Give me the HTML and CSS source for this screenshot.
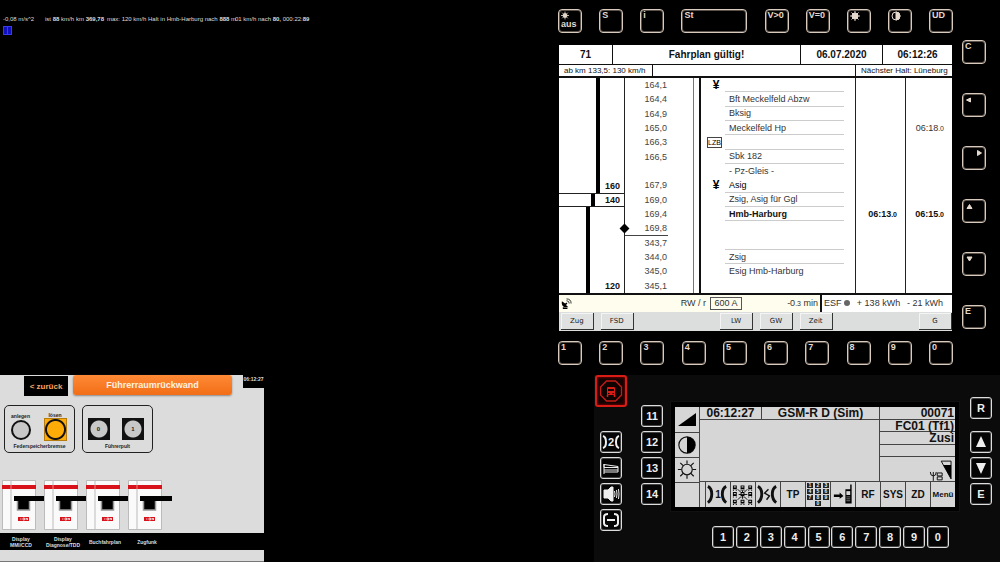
FILE: index.html
```html
<!DOCTYPE html>
<html lang="de">
<head>
<meta charset="utf-8">
<title>Führerstand</title>
<link rel="stylesheet" href="styles.css">
</head>
<body>
<main class="desk">
  <section class="console" aria-label="Fahrdaten">
    <p class="readout"><span>-0,08 m/s^2</span><span>ist <b>88</b> km/h</span><span>km <b>369,78</b></span><span>max: 120 km/h</span><span>Halt in Hmb-Harburg nach <b>888</b> m</span><span>01 km/h nach <b>80,</b> 000:22:<b>89</b></span></p>
    <svg class="signal" viewBox="0 0 9 9"><path d="M0 0h9v9H0z" fill="#3a3af0"/><path d="M1 1h3v7h-3zM5 1h3v7h-3z" fill="#1010c0"/></svg>
  </section>

  <section class="ebula" aria-label="EBuLa">
    <div class="unit">
      <div class="keys">
        <button class="key"><svg class="glyph small" viewBox="0 0 10 10"><circle cx="5" cy="5" r="2.500"/><path d="M5 0v10M0 5h10M1.500 1.500l7 7M8.500 1.500l-7 7"/></svg>aus</button>
        <button class="key">S</button>
        <button class="key">i</button>
        <button class="key wide">St</button>
        <button class="key">V&gt;0</button>
        <button class="key">V=0</button>
        <button class="key" aria-label="Hell"><svg class="glyph" viewBox="0 0 10 10"><circle cx="5" cy="5" r="3"/><path d="M5 0v10M0 5h10M1.500 1.500l7 7M8.500 1.500l-7 7"/></svg></button>
        <button class="key" aria-label="Kontrast"><svg class="glyph" viewBox="0 0 10 10"><circle cx="5" cy="5" r="4" fill="none"/><path d="M5 1a4 4 0 0 1 0 8z"/></svg></button>
        <button class="key">UD</button>
      </div>
      <div class="display">
        <header class="head"><span>71</span><span>Fahrplan gültig!</span><span>06.07.2020</span><span>06:12:26</span></header>
        <div class="sub"><span>ab km 133,5: 130 km/h</span><span></span><span>Nächster Halt: Lüneburg</span></div>
        <table class="plan">
          <colgroup><col class="c-speed"><col class="c-km"><col class="c-rule"><col class="c-sym"><col class="c-name"><col class="c-pad"><col class="c-arr"><col class="c-dep"></colgroup>
          <tbody>
          <tr><td class="speed v160" rowspan="8">160</td><td class="km">164,1</td><td class="rule" rowspan="15"></td><td class="sym">¥</td><td class="name line"></td><td rowspan="15"></td><td class="time"></td><td class="time"></td></tr>
          <tr><td class="km">164,4</td><td></td><td class="name line">Bft Meckelfeld Abzw</td><td class="time"></td><td class="time"></td></tr>
          <tr><td class="km">164,9</td><td></td><td class="name line">Bksig</td><td class="time"></td><td class="time"></td></tr>
          <tr><td class="km">165,0</td><td></td><td class="name line">Meckelfeld Hp</td><td class="time"></td><td class="time">06:18<small>.0</small></td></tr>
          <tr><td class="km">166,3</td><td class="sym"><span class="lzb">LZB</span></td><td class="name line"></td><td class="time"></td><td class="time"></td></tr>
          <tr><td class="km">166,5</td><td></td><td class="name line">Sbk 182</td><td class="time"></td><td class="time"></td></tr>
          <tr><td class="km"></td><td></td><td class="name">- Pz-Gleis -</td><td class="time"></td><td class="time"></td></tr>
          <tr><td class="km">167,9</td><td class="sym">¥</td><td class="name line dark">Asig</td><td class="time"></td><td class="time"></td></tr>
          <tr><td class="speed v140">140</td><td class="km">169,0</td><td></td><td class="name line">Zsig, Asig für Ggl</td><td class="time"></td><td class="time"></td></tr>
          <tr class="stop"><td class="speed v120" rowspan="6">120</td><td class="km">169,4</td><td></td><td class="name line">Hmb-Harburg</td><td class="time">06:13<small>.0</small></td><td class="time">06:15<small>.0</small></td></tr>
          <tr><td class="km here">169,8</td><td></td><td class="name"></td><td class="time"></td><td class="time"></td></tr>
          <tr><td class="km">343,7</td><td></td><td class="name line"></td><td class="time"></td><td class="time"></td></tr>
          <tr><td class="km">344,0</td><td></td><td class="name line">Zsig</td><td class="time"></td><td class="time"></td></tr>
          <tr><td class="km">345,0</td><td></td><td class="name">Esig Hmb-Harburg</td><td class="time"></td><td class="time"></td></tr>
          <tr><td class="km">345,1</td><td></td><td class="name"></td><td class="time"></td><td class="time"></td></tr>
          </tbody>
        </table>
        <div class="status">
          <div class="pale">
            <svg class="dish" viewBox="0 0 12 12"><path d="M1 3.500C0 8 3 11 8 10L5.500 7.500 7 6 6 5 4.500 6z"/><path d="M2 10v2h5v-1.500z"/><path d="M6 3q3 0 3 3M6 1q5 0 5 5" fill="none" stroke="#222"/></svg>
            <span class="mode">RW / r</span><span class="amp">600 A</span><span class="delay">-0<small>.3</small> min</span>
          </div>
          <div class="energy"><span>ESF <i class="dot"></i></span><span>+ 138 kWh</span><span>- 21 kWh</span></div>
        </div>
        <div class="soft"><button>Zug</button><button>FSD</button><i></i><i></i><button>LW</button><button>GW</button><button>Zeit</button><i></i><i></i><button>G</button></div>
      </div>
      <div class="keys"><button class="key">1</button><button class="key">2</button><button class="key">3</button><button class="key">4</button><button class="key">5</button><button class="key">6</button><button class="key">7</button><button class="key">8</button><button class="key">9</button><button class="key">0</button></div>
    </div>
    <div class="side">
      <button class="key">C</button>
      <button class="key" aria-label="Links"><svg class="glyph" viewBox="0 0 10 10"><path d="M1.500 5l4-2v4z"/></svg></button>
      <button class="key right" aria-label="Rechts"><svg class="glyph" viewBox="0 0 10 10"><path d="M8.500 5l-4-2.500v5z"/></svg></button>
      <button class="key" aria-label="Auf"><svg class="glyph" viewBox="0 0 10 10"><path d="M4.500 3.500l2.500 4h-5z"/></svg></button>
      <button class="key" aria-label="Ab"><svg class="glyph" viewBox="0 0 10 10"><path d="M4.500 7l2.500-4h-5z"/></svg></button>
      <button class="key">E</button>
    </div>
  </section>

  <section class="cab" aria-label="Führerraumrückwand">
    <header class="cab-head"><button class="back">&lt; zurück</button><h1>Führerraumrückwand</h1><time>06:12:27</time></header>
    <div class="groups">
      <fieldset class="group">
        <label class="sw" for="anl">anlegen<button id="anl" class="lamp" aria-label="anlegen"></button></label>
        <label class="sw" for="loe">lösen<button id="loe" class="lamp amber" aria-label="lösen"></button></label>
        <p>Federspeicherbremse</p>
      </fieldset>
      <fieldset class="group">
        <button class="lamp boxed">0</button><button class="lamp boxed">1</button>
        <p>Führerpult</p>
      </fieldset>
    </div>
    <div class="breakers">
      <button class="breaker" aria-label="Display MMI/CCD"><svg viewBox="0 0 45 50"><use href="#brk"/></svg></button>
      <button class="breaker" aria-label="Display Diagnose/TDD"><svg viewBox="0 0 45 50"><use href="#brk"/></svg></button>
      <button class="breaker" aria-label="Buchfahrplan"><svg viewBox="0 0 45 50"><use href="#brk"/></svg></button>
      <button class="breaker" aria-label="Zugfunk"><svg viewBox="0 0 45 50"><use href="#brk"/></svg></button>
    </div>
    <div class="labels"><span>Display<br>MMI/CCD</span><span>Display<br>Diagnose/TDD</span><span>Buchfahrplan</span><span>Zugfunk</span></div>
  </section>

  <section class="radio" aria-label="GSM-R">
    <div class="col icons">
      <button class="emergency" aria-label="Notruf"><svg viewBox="0 0 32 32"><path d="M11.500 6h9l6 6v8l-6 6h-9l-6-6v-8z" fill="none" stroke="#c51c16" stroke-width="1.300"/><path d="M12 13q0-1 1-1h6q1 0 1 1v7h-8z" fill="#d91c16"/><path d="M13 14h6v2h-6zM13 18h1.500v1H13zM17.500 18H19v1h-1.500z" fill="#160303"/><path d="M12.500 20v2M19.500 20v2" stroke="#d91c16" stroke-width="1.500"/></svg></button>
      <div class="stack">
        <button class="rk" aria-label="Kanal 2"><svg viewBox="0 0 22 22"><path d="M3 5q3 1 3 6t-3 6M19 5q-3 1-3 6t3 6" class="thick"/></svg><span>2</span></button>
        <button class="rk" aria-label="Hörer"><svg viewBox="0 0 22 22"><path d="M4 7.500l14 2v5.500H4M4 7v3.500h14M4 13h14M4 7v10" fill="none"/></svg></button>
        <button class="rk" aria-label="Lautsprecher"><svg viewBox="0 0 22 22"><path d="M4 7h4l3-3h2v14h-2l-3-3H4z" fill="#eee"/><path d="M14.500 8q1 3 0 6M16.500 7q1 4 0 8M18.500 6q1 5 0 10" fill="none"/></svg></button>
        <button class="rk" aria-label="Trennen"><svg viewBox="0 0 22 22"><path d="M8 5q-4 0-4 3v6q0 3 4 3M14 5q4 0 4 3v6q0 3-4 3M7 11h8" class="thick"/></svg></button>
      </div>
    </div>
    <div class="col numbers"><button class="rk">11</button><button class="rk">12</button><button class="rk">13</button><button class="rk">14</button></div>
    <div class="centre">
      <div class="frame">
        <div class="lcd">
          <div class="lcd-icons">
            <svg viewBox="0 0 24 25"><path d="M3 19L21 6v13z"/></svg>
            <svg viewBox="0 0 24 25"><circle cx="12" cy="12.500" r="8.500" fill="none" stroke="#111" stroke-width="1.200"/><path d="M12 4a8.500 8.500 0 0 1 0 17z"/></svg>
            <svg viewBox="0 0 24 25" fill="none" stroke="#111" stroke-width="1.200"><circle cx="12" cy="12" r="5.500"/><path d="M12 6V2.500M12 18v3.500M6 12H2.500M18 12h3.500M8 8L5 5M16 8l3-3M8 16l-3 3M16 16l3 3"/></svg>
            <i></i>
          </div>
          <div class="lcd-main">
            <div class="clock">06:12:27</div><div class="net">GSM-R D (Sim)</div>
            <div class="info"><span>00071</span><span>FC01 (Tf1)</span><span>Zusi</span><span></span>
              <svg viewBox="0 0 76 25"><path d="M62 4h10v18z" fill="none" stroke="#111"/><path d="M64 8h8v14z"/><path d="M54 15v9M51 15q0 4 3 4t3-4M58 16h5v3h-5zM58 20h5v3h-5z" fill="none" stroke="#111"/></svg>
            </div>
          </div>
          <div class="lcd-soft">
            <button aria-label="Kanal 1"><svg viewBox="0 0 25 25"><path d="M2 4q4 2 4 8t-4 9M21 4q-4 2-4 8t4 9" fill="none" stroke="#111" stroke-width="3"/></svg><span>1</span></button>
            <button aria-label="Alle Züge"><svg viewBox="0 0 25 25"><path d="M7 7l3 3M17 7l-3 3M7 18l3-3M17 18l-3-3M12 8v9M8 12.500h9" stroke="#111"/><use href="#tr" x="2" y="3"/><use href="#tr" x="10" y="3"/><use href="#tr" x="18" y="3"/><use href="#tr" x="2" y="10"/><use href="#tr" x="10" y="10"/><use href="#tr" x="18" y="10"/><use href="#tr" x="2" y="18"/><use href="#tr" x="10" y="18"/><use href="#tr" x="18" y="18"/></svg></button>
            <button aria-label="Rangieren"><svg viewBox="0 0 25 25"><path d="M2 4q4 2 4 8t-4 9M21 4q-4 2-4 8t4 9" fill="none" stroke="#111" stroke-width="3"/><path d="M13 7l-4 4 5 3-3 4" fill="none" stroke="#111" stroke-width="1.500"/></svg></button>
            <button>TP</button>
            <button aria-label="Ziffern"><span class="pad"><b>1</b><b>2</b><b>3</b><b>4</b><b>5</b><b>6</b><b>7</b><b>8</b><b>9</b><b class="zero">0</b></span></button>
            <button aria-label="Anrufen"><svg viewBox="0 0 25 25"><path d="M3 12.500h6v-2l4 3.500-4 3v-2H3zM15 7h5V2h1.500v20H15z"/><path d="M16 9h4v4h-4z" fill="#d6d6d6"/><path d="M16 15h4M16 17h4M16 19h4" stroke="#aaa" stroke-width=".7"/></svg></button>
            <button>RF</button><button>SYS</button><button>ZD</button><button class="menu">Menü</button>
          </div>
        </div>
      </div>
      <div class="digits"><button class="rk">1</button><button class="rk">2</button><button class="rk">3</button><button class="rk">4</button><button class="rk">5</button><button class="rk">6</button><button class="rk">7</button><button class="rk">8</button><button class="rk">9</button><button class="rk">0</button></div>
    </div>
    <div class="col nav">
      <button class="rk">R</button>
      <div class="stack">
        <button class="rk" aria-label="Auf"><svg viewBox="0 0 22 22"><path d="M11 5l5 11H6z" fill="#eee" stroke="none"/></svg></button>
        <button class="rk" aria-label="Ab"><svg viewBox="0 0 22 22"><path d="M11 17l5-11H6z" fill="#eee" stroke="none"/></svg></button>
        <button class="rk">E</button>
      </div>
    </div>
  </section>
</main>
<svg class="defs" aria-hidden="true">
  <defs>
    <g id="brk"><path d="M.5.5h33v49H.5z" fill="#fafafa" stroke="#bbb"/><path d="M9 1v48" stroke="#bbb"/><path d="M0 5h34v4H0z" fill="#d8121a"/><path d="M9 5v4" stroke="#e88"/><path d="M15.500 20h12v10h-12z" stroke="#999" stroke-width="1.500"/><path d="M12 16h32v5H12z"/><path d="M16 37h11v4H16z" fill="#d8121a"/><path d="M18 39h1.500M21 38h1.500v2H21zM24 40v-2l1.500 2v-2" fill="none" stroke="#fff" stroke-width=".7"/></g>
    <g id="tr"><path d="M0 0h4v4H0zM0 4.500h1v1H0zM3 4.500h1v1H3z"/><path d="M1 1h2v1.200H1z" fill="#d6d6d6"/></g>
  </defs>
</svg>
</body>
</html>
```
FILE: styles.css
```css
* { box-sizing: border-box; }
body { margin: 0; background: #000; font-family: "Liberation Sans", Arial, sans-serif; }
button { margin: 0; padding: 0; font: inherit; color: inherit; background: none; border: 0; }
p, h1 { margin: 0; }
small { font-size: 7px; }
.defs { display: block; width: 0; height: 0; position: absolute; }
.desk {
  display: grid;
  grid-template-columns: minmax(0, 264fr) minmax(0, 286fr) minmax(0, 44fr) minmax(0, 406fr);
  grid-template-rows: 375px 187px;
}

.console { grid-column: 1 / 3; padding: 16px 3px; color: #ddd; }
.readout { display: grid; grid-template-columns: 42px 31px 31px 41px 87px auto; font-size: 6px; line-height: 7px; white-space: nowrap; }
.signal { display: block; width: 9px; height: 9px; margin-top: 3px; }

/* Timetable display */
.ebula { grid-column: 3 / 5; display: flex; padding: 9px 14px 0 8px; }
.unit { flex: 1; min-width: 0; display: flex; flex-direction: column; }
.keys { display: flex; justify-content: space-between; }
.key {
  width: 24px; height: 24px; padding: 1px 2px;
  display: flex; flex-direction: column; align-items: flex-start;
  border: 1px solid #d8cbbd; border-radius: 4px; box-shadow: inset 0 0 0 1px #5a524a;
  background: #000; color: #e4d9cc; font-size: 9px; font-weight: bold; line-height: 9px;
}
.key.wide { width: 66px; }
.key.right { align-items: flex-end; }
.glyph { width: 10px; height: 10px; fill: #e4d9cc; stroke: #e4d9cc; stroke-width: 1; }
.glyph.small { width: 8px; height: 9px; }
.side { display: flex; flex-direction: column; gap: 29px; padding: 31px 0 0 9px; }
.display { margin: 12px 1px 10px; background: #fff; color: #333; font-size: 9px; }
.head { display: grid; grid-template-columns: 53fr 188fr 82fr 70fr; height: 20px; border-bottom: 1px solid #111; color: #111; font-size: 10px; font-weight: bold; line-height: 19px; text-align: center; }
.head span + span { border-left: 1px solid #111; }
.sub { display: grid; grid-template-columns: 93fr 203fr 97fr; height: 13px; border-bottom: 2px solid #111; font-size: 8px; line-height: 12px; white-space: nowrap; color: #111; }
.sub span { padding-left: 5px; }
.sub span + span { border-left: 1px solid #111; }
.plan { width: 100%; height: 215px; table-layout: fixed; border-collapse: separate; border-spacing: 0; line-height: 12px; }
.plan td { padding: 0; height: 14px; }
.c-speed { width: 65px; } .c-km { width: 69px; } .c-rule { width: 8px; } .c-sym { width: 24px; }
.c-name { width: 119px; } .c-pad { width: 11px; } .c-arr { width: 50px; } .c-dep { width: 47px; }
.plan .speed { padding: 0 4px 1px 0; text-align: right; vertical-align: bottom; font-weight: bold; color: #111; background: linear-gradient(#000, #000) no-repeat 37px 0 / 4px 100%; }
.plan .v140 { padding-bottom: 0; background-position: 32px 0; border-top: 1px solid #222; border-bottom: 1px solid #222; }
.plan .v120 { background-position: 27px 0; }
.plan .km { position: relative; padding-right: 26px; border-left: 1px solid #222; text-align: right; color: #444; }
.plan .here { background: linear-gradient(#444, #444) no-repeat 0 100% / 43px 1px; }
.here::before { content: ""; position: absolute; left: -4px; top: 4px; width: 7px; height: 7px; background: #000; transform: rotate(45deg); }
.plan .rule { border-left: 1px solid #777; border-right: 2px solid #111; }
.plan .sym { text-align: center; padding-left: 6px; font-size: 12px; font-weight: bold; color: #000; }
.lzb { display: block; width: 15px; height: 11px; border: 1px solid #444; font-size: 7px; font-weight: normal; line-height: 9px; }
.plan .name { padding-left: 4px; white-space: nowrap; }
.plan .line { border-bottom: 1px solid #ccc; }
.plan .dark, .stop .name { color: #000; }
.plan .time { padding-right: 8px; border-left: 1px solid #222; text-align: right; }
.stop .name, .stop .time { font-weight: bold; color: #111; }
.status { display: grid; grid-template-columns: 261fr 132fr; height: 19px; border-top: 2px solid #111; line-height: 17px; white-space: nowrap; }
.pale { display: flex; align-items: center; background: #fffeee; padding: 0 2px; }
.dish { width: 11px; height: 11px; margin-right: auto; }
.mode { margin-right: 4px; }
.amp { width: 32px; border: 1px solid #555; line-height: 11px; text-align: center; }
.delay { width: 76px; text-align: right; }
.energy { display: flex; justify-content: space-between; padding: 0 9px 0 2px; border-left: 2px solid #111; }
.dot { display: inline-block; width: 6px; height: 6px; border-radius: 50%; background: #666; }
.soft { display: grid; grid-template-columns: repeat(10, 1fr); gap: 7px; height: 19px; padding: 1px 0 1px 2px; background: #dcdddd; }
.soft button { border: solid #333; border-width: 0 1px 1px 0; box-shadow: inset 1px 1px #f4f4f4; background: #dfe0e0; color: #222; font-family: "DejaVu Sans", sans-serif; font-size: 7px; }

/* Rear wall panel */
.cab { grid-column: 1; display: flex; flex-direction: column; background: #dcdcdc; color: #222; border-bottom: 1px solid #777; font-weight: bold; }
.cab-head { display: flex; align-items: flex-start; justify-content: flex-end; height: 30px; }
.back { width: 44px; height: 20px; margin: 1px 5px 0 0; background: #000; color: #f6a562; font-size: 8px; }
.cab-head h1 { width: 159px; height: 20px; margin-right: 11px; border-radius: 3px; background: linear-gradient(#ff8a36, #f26d16); box-shadow: 0 1px 2px #888; color: #fff2e4; font-size: 9px; line-height: 20px; text-align: center; }
.cab-head time { width: 21px; height: 13px; background: #000; color: #ddd; font-size: 5px; line-height: 9px; text-align: center; }
.groups { display: flex; gap: 7px; padding-left: 4px; }
.group { display: grid; grid-template-columns: 31fr 38fr; grid-template-rows: 35px 10px; min-width: 0; width: 71px; height: 48px; margin: 0; padding: 0; border: 1px solid #222; border-radius: 5px; justify-items: center; align-items: end; }
.group p { grid-column: 1 / 3; font-size: 5px; line-height: 9px; }
.sw { display: flex; flex-direction: column; align-items: center; font-size: 5px; line-height: 6px; }
.lamp { width: 20px; height: 20px; margin: 1px; border: 2px solid #111; border-radius: 50%; background: #c8c8c8; }
.amber { width: 23px; height: 23px; margin: 0; border: 1px solid #b67c10; border-radius: 0; background: radial-gradient(circle, #ffab08 8px, #111 9px, #111 10px, #ffab08 11px); }
.boxed { width: 22px; height: 22px; margin: 0 0 1px; border: 0; border-radius: 0; background: radial-gradient(circle, #c8c8c8 8px, #111 9px); font-size: 6px; }
.breakers { display: grid; grid-template-columns: repeat(4, 42fr) 96fr; padding: 27px 0 0 2px; }
.breaker { display: block; height: 50px; margin-right: -3px; }
.breaker svg { display: block; width: 45px; height: 50px; }
.labels { display: grid; grid-template-columns: repeat(4, 42fr) 96fr; align-items: center; height: 17px; margin-top: 3px; background: #000; color: #ddd; font-size: 5px; line-height: 6px; text-align: center; }

/* Train radio */
.radio { grid-column: 4; display: flex; padding: 0 8px 0 1px; background: #0b0b0b; }
.rk { position: relative; display: block; width: 22px; height: 22px; border: 1px solid #ddd; border-radius: 3px; box-shadow: inset 0 0 0 1px #444; background: #050505; color: #eee; font-size: 11px; font-weight: bold; line-height: 18px; text-align: center; }
.rk svg { position: absolute; inset: -1px; width: 22px; height: 22px; fill: none; stroke: #eee; stroke-width: 1; }
.rk .thick { stroke-width: 2; }
.col, .stack { display: flex; flex-direction: column; gap: 4px; }
.icons { gap: 24px; align-items: center; }
.emergency { width: 32px; height: 32px; border: 2px solid #d91c16; border-radius: 3px; box-shadow: inset 0 0 3px #a00; background: #120303; }
.emergency svg { display: block; width: 32px; height: 32px; margin: -2px; }
.numbers { padding: 30px 8px 0 14px; }
.nav { padding: 22px 0 0 11px; gap: 12px; }
.centre { flex: 1; min-width: 0; padding-top: 27px; }
.frame { padding: 5px 4px 4px; background: #000; box-shadow: 0 0 0 1px #111; }
.lcd { display: grid; grid-template-columns: 25px 1fr; grid-template-rows: 75px 25px; background: #d6d6d6; color: #111; font-weight: bold; }
.lcd-icons { grid-row: 1 / 3; display: grid; grid-template-rows: repeat(4, 25px); border-right: 1px solid #444; }
.lcd-icons > * { width: 100%; height: 25px; }
.lcd-icons > * + * { border-top: 1px solid #444; }
.lcd-main { display: grid; grid-template-columns: 61fr 118fr 76fr; grid-template-rows: 13px 1fr; font-size: 12px; line-height: 13px; white-space: nowrap; border-bottom: 1px solid #444; }
.clock, .net { border-bottom: 1px solid #444; text-align: center; }
.net { border-left: 1px solid #444; }
.info { grid-column: 3; grid-row: 1 / 3; border-left: 1px solid #444; text-align: right; }
.info span { display: block; height: 13px; padding-right: 1px; border-bottom: 1px solid #444; line-height: 12px; }
.info span:nth-child(even) { height: 12px; }
.info svg { display: block; width: 100%; height: 25px; }
.lcd-soft { display: grid; grid-template-columns: repeat(10, 1fr); margin-left: 5px; font-size: 10px; }
.lcd-soft button { position: relative; border-left: 1px solid #444; }
.lcd-soft svg { position: absolute; inset: 0; width: 100%; height: 25px; }
.lcd-soft .menu { font-size: 8px; }
.pad { display: grid; grid-template-columns: repeat(3, 6px); gap: 1px 2px; justify-content: center; font-size: 5px; line-height: 5px; }
.pad b { background: #222; color: #eee; }
.pad .zero { grid-column: 2; }
.digits { display: flex; justify-content: space-between; padding: 15px 10px 0 41px; }
```
